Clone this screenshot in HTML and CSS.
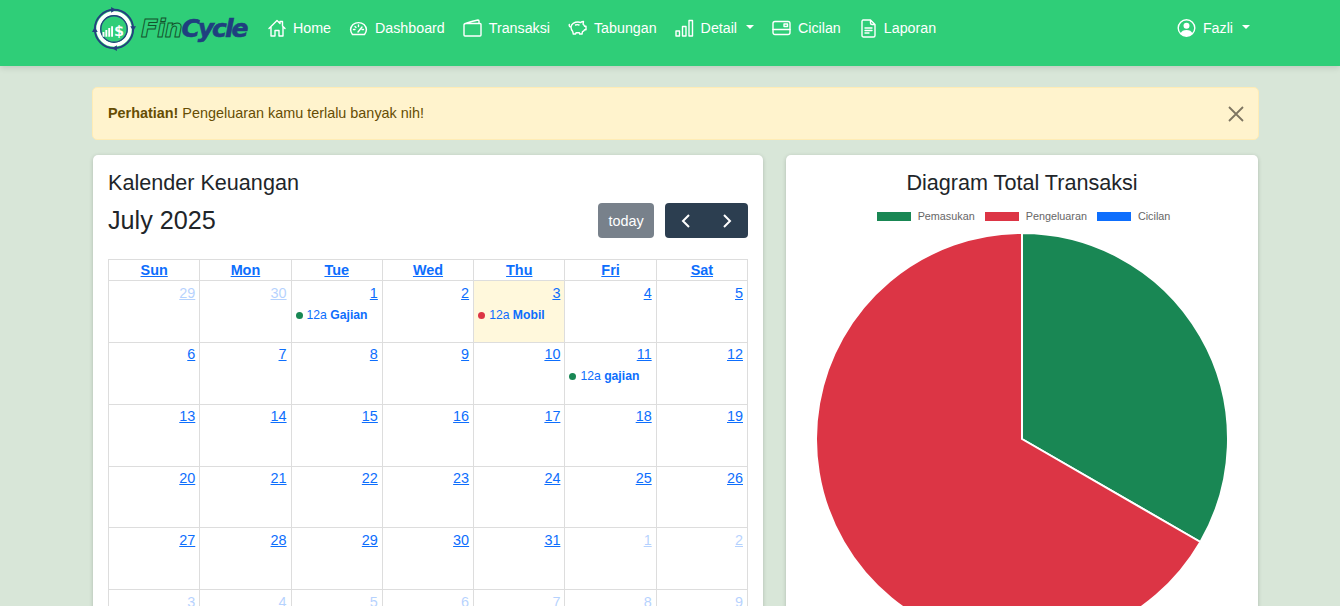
FILE: index.html
```html
<!DOCTYPE html>
<html>
  <head>
    <title>FinCycle</title>
    <link rel="stylesheet" href="styles.css">
  </head>
  <body>
    <nav class="navbar">
      <a class="brand">
        <svg class="brand-mark" viewBox="0 0 48 48">
          <circle cx="24" cy="24" r="20" fill="none" stroke="#24407f" stroke-width="2"/>
          <circle cx="24" cy="24" r="16.5" fill="none" stroke="#fff" stroke-width="4"/>
          <circle cx="24" cy="24" r="13.8" fill="none" stroke="#24407f" stroke-width="1.4"/>
          <path d="M21 1 26 4 21 7ZM27 47 22 44 27 41ZM1 27 4 22 7 27ZM47 21 44 26 41 21Z" fill="#24407f"/>
          <path d="M12 32v-5h2v5ZM15 32v-7h2v7ZM18 32v-9h2v9ZM21 32v-11h2v11Z" fill="#fff"/>
          <text class="brand-dollar" x="24" y="31">$</text>
        </svg>
        <span class="brand-fin">Fin</span><span class="brand-cycle">Cycle</span>
      </a>
      <ul class="nav-list">
        <li class="nav-item">
          <svg class="ico ico-18" viewBox="0 0 18 18"><path d="M1 9.500 9 1.500l3 3V2.500h2.500v4.500L17 9.500M3 7.500V17h4v-5.500h4V17h4V7.500"/></svg>
          Home
        </li>
        <li class="nav-item">
          <svg class="ico" viewBox="0 0 19 18"><path d="M3.500 15.500h12c3-4 2.500-7-.5-10C12 3 7 3 4 5.500 1 8.500.5 11.500 3.500 15.500Z"/><path d="M9.500 6v1.500M4.500 10.500H6M13 10.500h1.500M6 7.500l1 1M9 13l4-5"/></svg>
          Dashboard
        </li>
        <li class="nav-item">
          <svg class="ico" viewBox="0 0 19 18"><path d="M1 6.500V16c0 .6.400 1 1 1h15c.6 0 1-.4 1-1V5.500c0-.6-.4-1-1-1H2c-.6 0-1 .4-1 2ZM1 5.500C3 3.500 10 2 15 1c.6 0 1 .3 1 1v2.500"/></svg>
          Transaksi
        </li>
        <li class="nav-item">
          <svg class="ico" viewBox="0 0 19 18"><path d="M3 8C3 5 6.500 3 10 3c1 0 2 .2 2.700.5.800-.7 1.800-1 2.800-1l-.4 2.700c.7.500 1.200 1.200 1.400 2H18v3.600h-1.500c-.5.800-1.200 1.400-2 1.900l-.5 2.300h-2.300l-.3-1.200H8l-.4 1.200H5.300l-.6-2.600C3.600 11.400 3 10 3 8ZM3 8C1.800 8 .8 7 1.300 5.500M7.500 6c1-.4 2.500-.4 3.500 0"/></svg>
          Tabungan
        </li>
        <li class="nav-item">
          <svg class="ico" viewBox="0 0 19 18"><path d="M1 12h3.500v5H1ZM7.500 7.500H11V17H7.500ZM14 1.500h3.500V17H14Z"/></svg>
          Detail<span class="caret"></span>
        </li>
        <li class="nav-item">
          <svg class="ico" viewBox="0 0 19 18"><rect x="1" y="2.500" width="17" height="13" rx="2"/><path d="M1 10.500h17"/><rect x="12" y="5" width="3.500" height="2.500"/></svg>
          Cicilan
        </li>
        <li class="nav-item">
          <svg class="ico ico-file" viewBox="0 0 17 19"><path d="M3 1h7.500L15 5.500V16.500c0 .9-.7 1.500-1.500 1.500h-10C2.700 18 2 17.400 2 16.500V2.500C2 1.600 2.700 1 3 1ZM10.500 1v3c0 1 .6 1.500 1.500 1.500h3M5 9h7M5 11.500h7M5 14h4"/></svg>
          Laporan
        </li>
      </ul>
      <div class="nav-user">
        <svg class="ico" viewBox="0 0 19 18"><circle cx="9.500" cy="9" r="8.300"/><circle class="solid" cx="9.500" cy="6.800" r="3"/><path class="solid" d="M3.500 14.500c1-2.500 3-3.500 6-3.500s5 1 6 3.500c-1.500 1.600-3.500 2.600-6 2.600s-4.500-1-6-2.600Z"/></svg>
        Fazli<span class="caret"></span>
      </div>
    </nav>

    <div class="page">
      <div class="alert">
        <span class="alert-text"><strong>Perhatian!</strong> Pengeluaran kamu terlalu banyak nih!</span>
        <svg class="alert-close" viewBox="0 0 16 16"><path d="M1 1 15 15M15 1 1 15"/></svg>
      </div>

      <div class="cols">
        <section class="card">
          <h4 class="card-title">Kalender Keuangan</h4>
          <div class="toolbar">
            <h2 class="cal-title">July 2025</h2>
            <div class="cal-btns">
              <button class="btn-today">today</button>
              <div class="btn-group">
                <svg viewBox="0 0 12 16"><path d="M9 2 3 8l6 6"/></svg>
                <svg viewBox="0 0 12 16"><path d="M3 2l6 6-6 6"/></svg>
              </div>
            </div>
          </div>
          <table class="cal">
            <thead>
              <tr><th><a>Sun</a></th><th><a>Mon</a></th><th><a>Tue</a></th><th><a>Wed</a></th><th><a>Thu</a></th><th><a>Fri</a></th><th><a>Sat</a></th></tr>
            </thead>
            <tbody>
              <tr>
                <td class="other"><a class="day">29</a></td>
                <td class="other"><a class="day">30</a></td>
                <td><a class="day">1</a><div class="event"><i class="dot green"></i>12a <b>Gajian</b></div></td>
                <td><a class="day">2</a></td>
                <td class="today"><a class="day">3</a><div class="event"><i class="dot red"></i>12a <b>Mobil</b></div></td>
                <td><a class="day">4</a></td>
                <td><a class="day">5</a></td>
              </tr>
              <tr>
                <td><a class="day">6</a></td>
                <td><a class="day">7</a></td>
                <td><a class="day">8</a></td>
                <td><a class="day">9</a></td>
                <td><a class="day">10</a></td>
                <td><a class="day">11</a><div class="event"><i class="dot green"></i>12a <b>gajian</b></div></td>
                <td><a class="day">12</a></td>
              </tr>
              <tr>
                <td><a class="day">13</a></td>
                <td><a class="day">14</a></td>
                <td><a class="day">15</a></td>
                <td><a class="day">16</a></td>
                <td><a class="day">17</a></td>
                <td><a class="day">18</a></td>
                <td><a class="day">19</a></td>
              </tr>
              <tr>
                <td><a class="day">20</a></td>
                <td><a class="day">21</a></td>
                <td><a class="day">22</a></td>
                <td><a class="day">23</a></td>
                <td><a class="day">24</a></td>
                <td><a class="day">25</a></td>
                <td><a class="day">26</a></td>
              </tr>
              <tr>
                <td><a class="day">27</a></td>
                <td><a class="day">28</a></td>
                <td><a class="day">29</a></td>
                <td><a class="day">30</a></td>
                <td><a class="day">31</a></td>
                <td class="other"><a class="day">1</a></td>
                <td class="other"><a class="day">2</a></td>
              </tr>
              <tr>
                <td class="other"><a class="day">3</a></td>
                <td class="other"><a class="day">4</a></td>
                <td class="other"><a class="day">5</a></td>
                <td class="other"><a class="day">6</a></td>
                <td class="other"><a class="day">7</a></td>
                <td class="other"><a class="day">8</a></td>
                <td class="other"><a class="day">9</a></td>
              </tr>
            </tbody>
          </table>
        </section>

        <section class="card card-chart">
          <h4 class="chart-title">Diagram Total Transaksi</h4>
          <div class="legend">
            <span class="legend-item"><i class="swatch green"></i>Pemasukan</span>
            <span class="legend-item"><i class="swatch red"></i>Pengeluaran</span>
            <span class="legend-item"><i class="swatch blue"></i>Cicilan</span>
          </div>
          <svg class="pie" viewBox="0 0 414 414">
            <path d="M207 207V1A206 206 0 0 1 385.400 310Z" fill="#198754" stroke="#fff" stroke-width="2"/>
            <path d="M207 207 385.400 310A206 206 0 1 1 207 1Z" fill="#dc3545" stroke="#fff" stroke-width="2"/>
          </svg>
        </section>
      </div>
    </div>
  </body>
</html>
```

FILE: styles.css
```css
html, body {
  height: 606px;
  overflow: hidden;
}
body {
  margin: 0;
  background: #d8e6d8;
  color: #212529;
  font-family: "Liberation Sans", Arial, sans-serif;
  font-size: 14.4px;
}

/* navbar */
.navbar {
  display: flex;
  align-items: flex-start;
  height: 66px;
  padding-left: 92px;
  padding-right: 90px;
  box-sizing: border-box;
  background: #2fce78;
  color: #fff;
  font-size: 14.25px;
  box-shadow: 0 2px 6px rgba(0,0,0,.12);
}
.brand {
  display: flex;
  align-items: center;
  width: 157px;
  height: 57px;
  font-family: "DejaVu Sans", sans-serif;
  font-weight: bold;
  font-style: italic;
  font-size: 25px;
}
.brand-mark {
  width: 46px;
  height: 46px;
  margin-left: -1px;
  margin-right: 4px;
  flex: none;
}
.brand-dollar {
  fill: #fff;
  font-size: 15px;
  font-style: normal;
}
.brand-fin {
  color: transparent;
  letter-spacing: -1px;
  -webkit-text-stroke: 1px #14532d;
}
.brand-cycle {
  color: #1f3f7f;
  letter-spacing: -2px;
  -webkit-text-stroke: .6px #1f3f7f;
}
.nav-list {
  display: flex;
  gap: 18px;
  margin: 0 0 0 19px;
  padding: 0;
  list-style: none;
}
.nav-item, .nav-user {
  display: flex;
  align-items: center;
  height: 56px;
}
.nav-user {
  margin-left: auto;
}
.ico {
  width: 19px;
  height: 18px;
  margin-right: 7px;
  fill: none;
  stroke: #fff;
  stroke-width: 1.4;
  stroke-linejoin: round;
  stroke-linecap: round;
}
.ico-18 {
  width: 18px;
  margin-right: 7px;
}
.ico-file {
  width: 17px;
  height: 19px;
  margin-left: 1px;
}
.ico .solid {
  fill: #fff;
  stroke: none;
}
.caret {
  width: 0;
  height: 0;
  margin-left: 9px;
  margin-bottom: 2px;
  border-top: 4px solid #fff;
  border-left: 4px solid transparent;
  border-right: 4px solid transparent;
}

/* content */
.page {
  margin-left: 92px;
  width: 1167px;
}
.alert {
  display: flex;
  justify-content: space-between;
  align-items: center;
  box-sizing: border-box;
  height: 53px;
  margin-top: 21px;
  padding: 0 14px 0 15px;
  background: #fff3cd;
  border: 1px solid #ffecb5;
  border-radius: 5px;
  color: #664d03;
}
.alert-text {
  margin-bottom: 2px;
}
.alert-close {
  width: 16px;
  height: 16px;
  fill: none;
  stroke: #7d7561;
  stroke-width: 1.8;
}
.cols {
  display: flex;
  justify-content: space-between;
  margin: 15px 1px 0;
}
.card {
  box-sizing: border-box;
  width: 670px;
  height: 700px;
  padding: 15px;
  background: #fff;
  border-radius: 5px;
  box-shadow: 0 1px 4px rgba(0,0,0,.18);
}
.card-chart {
  width: 472px;
  text-align: center;
}
.card-title, .chart-title {
  margin: 0;
  font-size: 21.6px;
  font-weight: normal;
  line-height: 26px;
}
.toolbar {
  display: flex;
  justify-content: space-between;
  align-items: flex-start;
  margin-top: 7px;
  height: 56px;
}
.cal-title {
  margin: 0;
  font-size: 25.2px;
  font-weight: normal;
  line-height: 35px;
}
.cal-btns {
  display: flex;
  gap: 11px;
}
.btn-today {
  width: 56px;
  height: 35px;
  padding: 0;
  border: 0;
  border-radius: 4px;
  background: #78818b;
  color: #fff;
  font: inherit;
}
.btn-group {
  display: flex;
  justify-content: space-around;
  align-items: center;
  width: 83px;
  height: 35px;
  border-radius: 4px;
  background: #2c3e50;
}
.btn-group svg {
  width: 12px;
  height: 16px;
  fill: none;
  stroke: #fff;
  stroke-width: 2;
}

/* calendar */
.cal {
  width: 640px;
  table-layout: fixed;
  border-collapse: collapse;
}
.cal th, .cal td {
  border: 1px solid #ddd;
  padding: 0;
}
.cal th {
  height: 20px;
  font-size: 14.4px;
}
.cal a {
  color: #0d6efd;
  text-decoration: underline;
}
.cal td {
  height: 60.85px;
  vertical-align: top;
  text-align: right;
}
.day {
  display: inline-block;
  padding: 3.6px 4px 0 0;
  line-height: 17px;
}
.other .day {
  opacity: .3;
}
.today {
  background: #fff8dc;
}
.event {
  display: flex;
  align-items: center;
  margin: 5px 0 0 4px;
  font-size: 12.2px;
  line-height: 17px;
  color: #0d6efd;
  white-space: pre;
}
.dot {
  width: 7px;
  height: 7px;
  margin-right: 4px;
  border-radius: 50%;
}
.green { background: #198754; }
.red { background: #dc3545; }
.blue { background: #0d6efd; }

/* chart */
.legend {
  display: flex;
  justify-content: center;
  gap: 10px;
  margin: 14px 0 0 3px;
  font-size: 10.8px;
  line-height: 12px;
  color: #666;
}
.legend-item {
  display: flex;
  align-items: center;
}
.swatch {
  width: 34px;
  height: 9px;
  margin-right: 7px;
}
.pie {
  display: block;
  width: 414px;
  height: 414px;
  margin: 10px auto 0;
}
```
